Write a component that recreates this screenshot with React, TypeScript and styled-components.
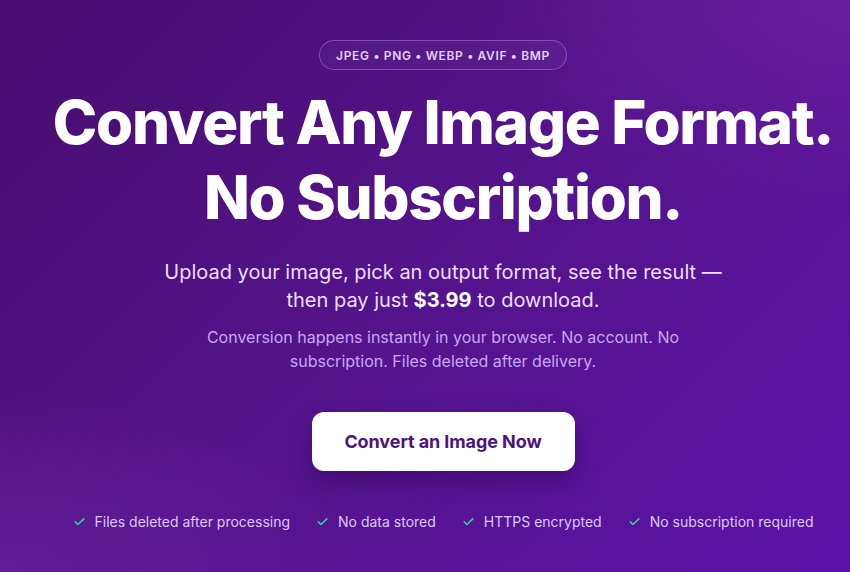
import React from "react";
import styled, { createGlobalStyle } from "styled-components";

const Global = createGlobalStyle`
  html, body { margin: 0; padding: 0; }
  body { font-family: Inter, "Noto Sans", sans-serif; -webkit-font-smoothing: antialiased; }
  * { box-sizing: border-box; }
`;

const Hero = styled.section`
  width: 850px;
  height: 572px;
  overflow: hidden;
  background:
    radial-gradient(ellipse 60% 50% at 100% 0%, rgba(120, 40, 170, 0.55), transparent 70%),
    radial-gradient(ellipse 55% 45% at 0% 100%, rgba(115, 40, 170, 0.5), transparent 70%),
    linear-gradient(135deg, #470d6e 0%, #54148c 50%, #5b13a6 100%);
  display: flex;
  flex-direction: column;
  align-items: center;
  padding: 40px 0 0 36px;
  color: #fff;
`;

const Badge = styled.div`
  display: inline-flex;
  align-items: center;
  height: 30px;
  padding: 0 16px;
  border: 1px solid rgba(190, 140, 240, 0.45);
  border-radius: 999px;
  background: rgba(255, 255, 255, 0.04);
  font-size: 12px;
  font-weight: 600;
  letter-spacing: 0.055em;
  color: #e3cff8;
`;

const Title = styled.h1`
  margin: 15px 0 0;
  font-size: 60px;
  line-height: 75px;
  font-weight: 800;
  letter-spacing: -0.022em;
  text-align: center;
  white-space: nowrap;
`;

const Lead = styled.p`
  margin: 23px 0 0;
  width: 564px;
  font-size: 20px;
  line-height: 28px;
  color: #ecdfff;
  text-align: center;
`;

const Price = styled.strong`
  color: #fff;
  font-weight: 700;
`;

const Note = styled.p`
  margin: 11px 0 0;
  width: 490px;
  font-size: 16px;
  line-height: 24px;
  color: #c9a6f2;
  text-align: center;
`;

const Cta = styled.button`
  margin-top: 39px;
  width: 263px;
  height: 59px;
  border: none;
  border-radius: 12px;
  background: #fff;
  color: #4c1480;
  font-family: inherit;
  font-size: 18px;
  font-weight: 700;
  letter-spacing: -0.005em;
  box-shadow: 0 10px 24px rgba(30, 0, 60, 0.35);
  cursor: pointer;
`;

const Checks = styled.ul`
  list-style: none;
  margin: 42px 0 0;
  padding: 0;
  display: flex;
  gap: 26px;
`;

const Check = styled.li`
  display: flex;
  align-items: center;
  gap: 9px;
  font-size: 14px;
  color: #dcc8f7;
  white-space: nowrap;
`;

const Tick = () => (
  <svg width="13" height="13" viewBox="0 0 24 24" fill="none" stroke="#34d399" strokeWidth="3" strokeLinecap="round" strokeLinejoin="round">
    <path d="M4 12.5l5 5L20 7" />
  </svg>
);

const items = ["Files deleted after processing", "No data stored", "HTTPS encrypted", "No subscription required"];

export default function App() {
  return (
    <>
      <Global />
      <Hero>
        <Badge>JPEG • PNG • WEBP • AVIF • BMP</Badge>
        <Title>
          Convert Any Image Format.
          <br />
          No Subscription.
        </Title>
        <Lead>
          Upload your image, pick an output format, see the result — then pay just <Price>$3.99</Price> to download.
        </Lead>
        <Note>Conversion happens instantly in your browser. No account. No subscription. Files deleted after delivery.</Note>
        <Cta>Convert an Image Now</Cta>
        <Checks>
          {items.map((t) => (
            <Check key={t}>
              <Tick />
              {t}
            </Check>
          ))}
        </Checks>
      </Hero>
    </>
  );
}
